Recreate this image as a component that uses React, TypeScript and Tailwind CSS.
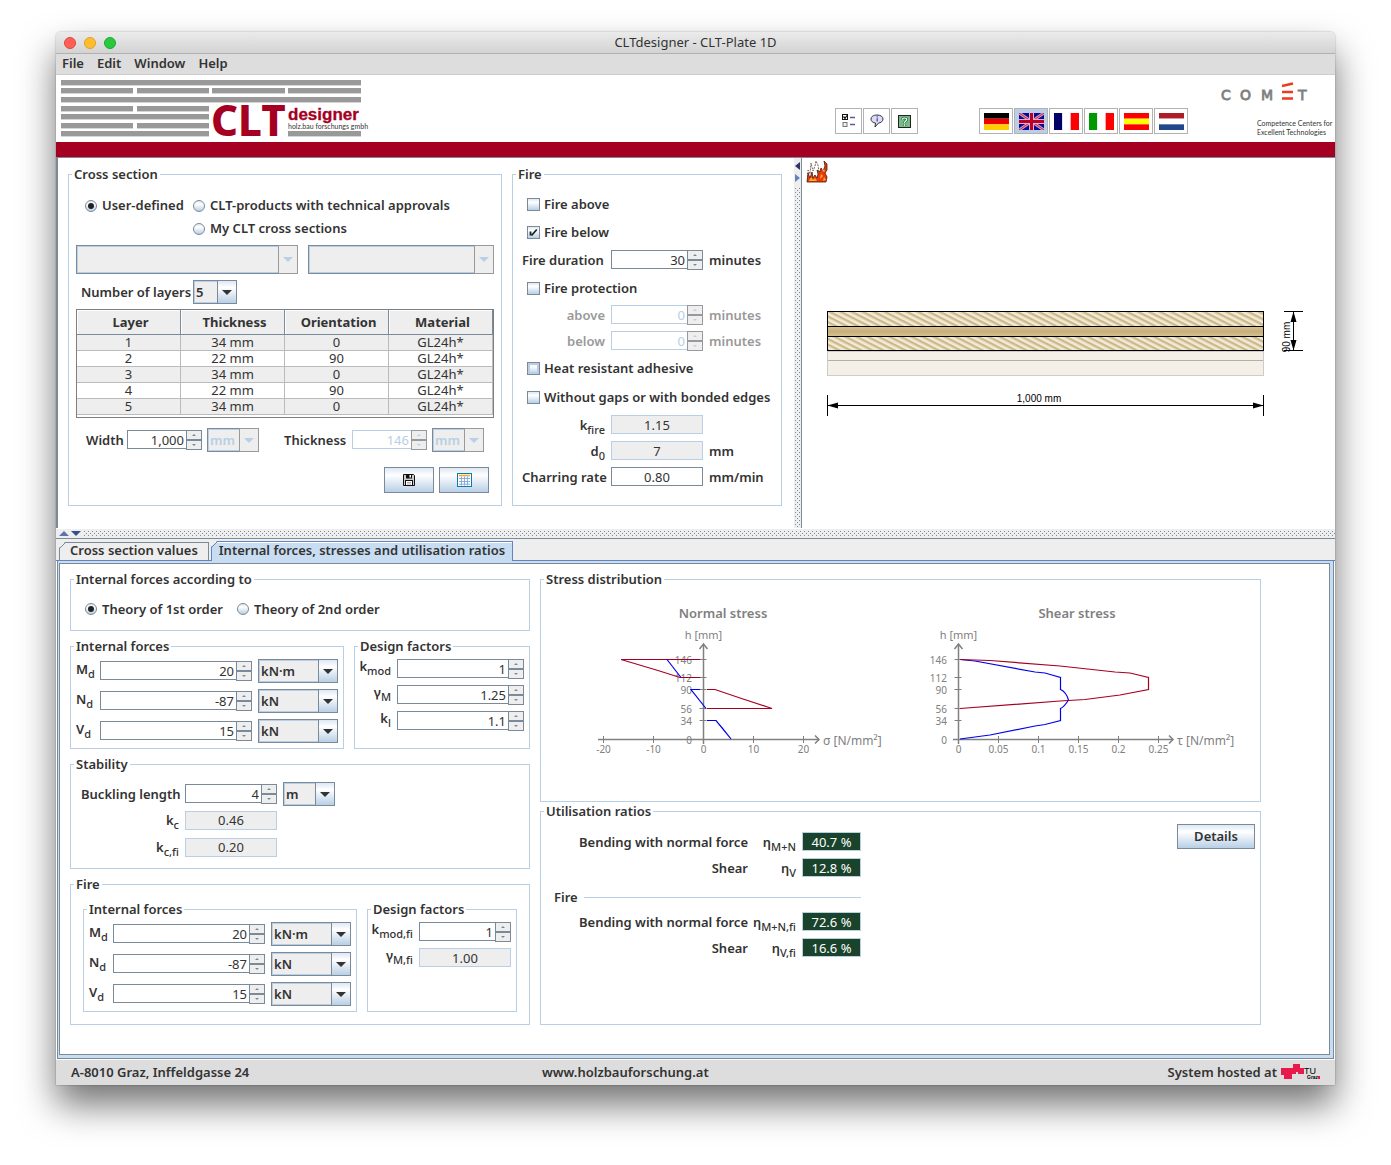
import { useId, type ReactNode } from "react"
import clsx from "clsx"

const layers = [
  { thickness: "34 mm", orientation: "0", material: "GL24h*" },
  { thickness: "22 mm", orientation: "90", material: "GL24h*" },
  { thickness: "34 mm", orientation: "0", material: "GL24h*" },
  { thickness: "22 mm", orientation: "90", material: "GL24h*" },
  { thickness: "34 mm", orientation: "0", material: "GL24h*" },
]

const forces = [
  { symbol: "M", value: "20", unit: "kN·m" },
  { symbol: "N", value: "-87", unit: "kN" },
  { symbol: "V", value: "15", unit: "kN" },
]

function Group({ title, className, children }: { title: string; className?: string; children: ReactNode }) {
  return (
    <fieldset className={clsx("min-w-0 border border-[#b8cfe5]", className)}>
      <legend className="ml-[3px] px-[2px] leading-[17px]">{title}</legend>
      {children}
    </fieldset>
  )
}

function Sym({ base, sub }: { base: string; sub: string }) {
  return (
    <span className="whitespace-nowrap">
      {base}
      <span className="relative top-1 text-[11px] font-medium">{sub}</span>
    </span>
  )
}

function Spinner({ id, label, value, className, disabled }: { id?: string; label?: string; value: string; className?: string; disabled?: boolean }) {
  const step = clsx(
    "flex h-[10px] w-4 items-center justify-center border bg-[#eeeeee]",
    disabled ? "border-[#999999] text-[#b8cfe5]" : "border-[#7a8a99] text-[#7a8a99]",
  )
  return (
    <div className={clsx("flex h-5 min-w-0 items-start", className)}>
      <input
        id={id}
        aria-label={label}
        defaultValue={value}
        disabled={disabled}
        className={clsx(
          "h-[19px] min-w-0 flex-1 border border-r-0 bg-white pr-[2px] text-right font-normal",
          disabled ? "border-[#b8cfe5] text-[#b8cfe5]" : "border-[#7a8a99]",
        )}
      />
      <span className="flex flex-col">
        <button type="button" aria-label="Increase" disabled={disabled} className={step}>
          <svg width="4" height="2" viewBox="0 0 4 2" fill="currentColor">
            <path d="M0 2L2 0L4 2Z" />
          </svg>
        </button>
        <button type="button" aria-label="Decrease" disabled={disabled} className={step}>
          <svg width="4" height="2" viewBox="0 0 4 2" fill="currentColor">
            <path d="M0 0L2 2L4 0Z" />
          </svg>
        </button>
      </span>
    </div>
  )
}

function Combo({ id, label, value, className, disabled }: { id?: string; label?: string; value: string; className?: string; disabled?: boolean }) {
  return (
    <div className={clsx("relative", className)}>
      <select
        id={id}
        aria-label={label}
        disabled={disabled}
        className={clsx(
          "h-full w-full appearance-none border border-[#7a8a99] bg-[#eeeeee] pl-[2px] opacity-100 shadow-[inset_1px_1px_0_#b8cfe5,inset_0_-1px_0_#b8cfe5]",
          disabled && "text-[#b8cfe5]",
        )}
      >
        <option>{value}</option>
      </select>
      <span
        className={clsx(
          "pointer-events-none absolute inset-y-0 right-0 flex w-5 items-center justify-center border",
          disabled
            ? "border-[#999999] bg-[#eeeeee] text-[#b8cfe5]"
            : "border-[#7a8a99] bg-linear-to-b from-[#dde8f3] via-white via-30% to-[#b8cfe5] text-[#333333]",
        )}
      >
        <svg width="10" height="5" viewBox="0 0 10 5" fill="currentColor">
          <path d="M0 0H10L5 5Z" />
        </svg>
      </span>
    </div>
  )
}

function Radio({ name, label, checked }: { name: string; label: string; checked?: boolean }) {
  return (
    <label className="flex items-center gap-[5px] whitespace-nowrap">
      <span className="grid place-items-center">
        <input
          type="radio"
          name={name}
          defaultChecked={checked}
          className="peer col-start-1 row-start-1 size-3 appearance-none rounded-full border border-[#7a8a99] bg-linear-to-b from-[#dde8f3] via-white via-30% to-[#b8cfe5]"
        />
        <span className="pointer-events-none invisible col-start-1 row-start-1 size-[6px] rounded-full bg-[#222222] peer-checked:visible" />
      </span>
      {label}
    </label>
  )
}

function Check({ label, checked, pressed }: { label: string; checked?: boolean; pressed?: boolean }) {
  return (
    <label className="flex items-center gap-1 whitespace-nowrap">
      <span className="grid place-items-center">
        <input
          type="checkbox"
          defaultChecked={checked}
          className={clsx(
            "peer col-start-1 row-start-1 size-[13px] appearance-none border border-[#7a8a99] bg-linear-to-b from-[#dde8f3] via-white via-30% to-[#b8cfe5]",
            pressed && "shadow-[inset_0_0_0_2px_#b8cfe5]",
          )}
        />
        <svg className="pointer-events-none invisible col-start-1 row-start-1 peer-checked:visible" width="9" height="9" viewBox="0 0 9 9">
          <path d="M1.5 3.5V7.5M2.5 7.5L7.8 1.5" fill="none" stroke="#222222" strokeWidth="1.8" />
        </svg>
      </span>
      {label}
    </label>
  )
}

function Result({ id, value, className }: { id: string; value: string; className?: string }) {
  return (
    <input
      id={id}
      readOnly
      value={value}
      className={clsx("mb-px h-[19px] border border-[#b8cfe5] bg-[#eeeeee] text-center font-normal", className)}
    />
  )
}

const metal = "border border-[#7a8a99] bg-linear-to-b from-[#dde8f3] via-white via-30% to-[#b8cfe5]"

function ForcesGroup({ className }: { className?: string }) {
  const id = useId()
  return (
    <Group title="Internal forces" className={className}>
      <div className="flex flex-col gap-[6px] px-[5px] pt-1 pb-[5px]">
        {forces.map((f) => (
          <div key={f.symbol} className="flex h-6 items-center">
            <label htmlFor={id + f.symbol} className="w-6 shrink-0 self-start leading-5">
              <Sym base={f.symbol} sub="d" />
            </label>
            <Spinner id={id + f.symbol} value={f.value} className="flex-1" />
            <Combo label={`Unit of ${f.symbol}`} value={f.unit} className="ml-[6px] h-6 w-20 shrink-0" />
          </div>
        ))}
      </div>
    </Group>
  )
}

function Logo() {
  const bars = [
    [0, 0, 300], [0, 8, 72], [76, 8, 72], [151, 8, 73], [227, 8, 73], [0, 17, 300],
    [0, 26, 72], [76, 26, 72], [0, 34, 148], [0, 43, 72], [76, 43, 72], [0, 51, 148], [227, 51, 73],
  ]
  return (
    <svg width="300" height="58" viewBox="0 0 300 58" className="overflow-visible" role="img" aria-label="CLT designer">
      {bars.map(([x, y, w]) => (
        <rect key={`${x}-${y}`} x={x} y={y} width={w} height="5.4" fill="#999999" />
      ))}
      <text x="150" y="56" fontSize="42" fontWeight="800" fill="#a50021" className="font-['Noto_Sans',sans-serif]">CLT</text>
      <text x="227" y="40" fontSize="17" fontWeight="700" fill="#a50021" stroke="#a50021" strokeWidth="0.3" className="font-['Liberation_Sans',sans-serif]">designer</text>
      <text x="227" y="49" fontSize="7" fontWeight="400" fill="#333333" className="font-['Lato',sans-serif]">holz.bau forschungs gmbh</text>
    </svg>
  )
}

function CometLogo() {
  return (
    <svg width="110" height="58" viewBox="0 0 110 58" className="overflow-visible" role="img" aria-label="COMET Competence Centers for Excellent Technologies">
      <g fontSize="14" fontWeight="400" fill="#808080" stroke="#808080" strokeWidth="0.8" className="font-['DejaVu_Sans',sans-serif]">
        <text x="0" y="20">C</text>
        <text x="19" y="20">O</text>
        <text x="40" y="20">M</text>
        <text x="77" y="20">T</text>
      </g>
      <path d="M61 6L72 3.500M61 12H72M61 18.500H72" stroke="#ee3a20" strokeWidth="2.4" fill="none" />
      <g fontSize="7" fontWeight="400" fill="#333333" className="font-['Lato',sans-serif]">
        <text x="36" y="46">Competence Centers for</text>
        <text x="36" y="55">Excellent Technologies</text>
      </g>
    </svg>
  )
}

const stripes = [
  { name: "Deutsch", dir: "h", colors: ["#000000", "#ee0000", "#ffcc00"] },
  { name: "English", dir: "uk", colors: [] },
  { name: "Français", dir: "v", colors: ["#000066", "#ffffff", "#ff0000"] },
  { name: "Italiano", dir: "v", colors: ["#009900", "#ffffff", "#ff0000"] },
  { name: "Español", dir: "h", colors: ["#ff0000", "#ffff00", "#ff0000"] },
  { name: "Nederlands", dir: "h", colors: ["#ae1c28", "#ffffff", "#21468b"] },
]

function Flag({ dir, colors }: { dir: string; colors: string[] }) {
  return (
    <svg width="25" height="17" viewBox="0 0 25 17">
      {dir === "h" && colors.map((c, i) => <rect key={i} y={i * 5.67} width="25" height="5.67" fill={c} />)}
      {dir === "v" && colors.map((c, i) => <rect key={i} x={i * 8.33} width="8.34" height="17" fill={c} />)}
      {dir === "uk" && (
        <>
          <rect width="25" height="17" fill="#0a0a9a" />
          <path d="M0 0L25 17M25 0L0 17" stroke="#d8a0b8" strokeWidth="3" />
          <path d="M0 0L25 17M25 0L0 17" stroke="#c8204a" strokeWidth="1" />
          <path d="M12.5 0V17M0 8.5H25" stroke="#e0b0c4" strokeWidth="5" />
          <path d="M12.5 0V17M0 8.5H25" stroke="#b8002a" strokeWidth="3" />
        </>
      )}
    </svg>
  )
}

function Header() {
  const tool = "flex h-[26px] w-[27px] items-center justify-center border border-[#b2b2b2] bg-white"
  return (
    <header className="flex h-[67px] items-start bg-white pl-[5px] pr-1 pt-[5px]">
      <Logo />
      <div className="flex flex-1 justify-end gap-px pt-7">
        <button type="button" aria-label="Options" className={tool}>
          <svg width="14" height="14" viewBox="0 0 14 14">
            <rect x="0.5" y="0.5" width="5" height="5" fill="#fff" stroke="#111" />
            <path d="M1.5 2.5L3 4.5L5 1.5" fill="none" stroke="#111" strokeWidth="1.3" />
            <rect x="1" y="8.5" width="4" height="4" fill="#eee" stroke="#777" />
            <path d="M8 3.5H13M8 10.5H13" stroke="#5a5a9a" strokeWidth="1.4" />
          </svg>
        </button>
        <button type="button" aria-label="Info" className={tool}>
          <svg width="14" height="14" viewBox="0 0 14 14">
            <path d="M7 1C10.500 1 13 2.600 13 5C13 7.400 10.500 9 8.500 9L5 13L5.500 9C3 8.800 1 7.300 1 5C1 2.600 3.500 1 7 1Z" fill="#dcdcf4" stroke="#333" />
            <path d="M7.200 2.300V3.400M7.200 4.300V7.500" stroke="#4444aa" strokeWidth="1.2" />
          </svg>
        </button>
        <button type="button" aria-label="Help" className={tool}>
          <svg width="13" height="13" viewBox="0 0 13 13">
            <rect x="0.500" y="0.500" width="12" height="12" fill="#7ab88a" stroke="#222" />
            <path d="M4.300 4.500C4.300 2.500 8.700 2.500 8.700 4.500C8.700 6 6.500 6 6.500 8M6.500 9.200V10.800" fill="none" stroke="#173" strokeWidth="2.600" />
            <path d="M4.300 4.500C4.300 2.500 8.700 2.500 8.700 4.500C8.700 6 6.500 6 6.500 8M6.500 9.200V10.800" fill="none" stroke="#fff" strokeWidth="1.200" />
          </svg>
        </button>
      </div>
      <div className="ml-[61px] mr-[33px] flex gap-px pt-7">
        {stripes.map((s) => (
          <button
            key={s.name}
            type="button"
            aria-label={s.name}
            className={clsx(
              "flex h-[26px] w-[34px] items-center justify-center border border-[#b2b2b2]",
              s.dir === "uk" ? "bg-[#b8cfe5]" : "bg-white",
            )}
          >
            <Flag dir={s.dir} colors={s.colors} />
          </button>
        ))}
      </div>
      <CometLogo />
    </header>
  )
}

function CrossSectionGroup() {
  return (
    <Group title="Cross section" className="w-[434px]">
      <div className="px-[7px] pt-[11px] pb-3">
        <div className="grid grid-cols-[108px_1fr] auto-rows-[23px] items-center pl-[9px]">
          <Radio name="source" label="User-defined" checked />
          <Radio name="source" label="CLT-products with technical approvals" />
          <span />
          <Radio name="source" label="My CLT cross sections" />
        </div>
        <div className="mt-[5px] flex h-[29px] gap-[10px]">
          <Combo label="Producer" value="" disabled className="w-[222px]" />
          <Combo label="Product" value="" disabled className="flex-1" />
        </div>
        <div className="mt-[6px] flex items-center pl-[5px]">
          <label htmlFor="layers" className="w-28 whitespace-nowrap">Number of layers</label>
          <Combo id="layers" value="5" className="h-6 w-11" />
        </div>
        <div className="mt-[5px] border border-[#7f7f7f] pb-[2px]">
          <table className="w-full table-fixed border-separate border-spacing-0 text-center">
            <thead>
              <tr>
                {["Layer", "Thickness", "Orientation", "Material"].map((h) => (
                  <th key={h} className="h-[25px] border-r border-b border-[#7a8a99] bg-[#eeeeee] p-0 pl-1 shadow-[inset_1px_1px_0_#ffffff]">
                    {h}
                  </th>
                ))}
              </tr>
            </thead>
            <tbody className="leading-[15px] font-normal">
              {layers.map((l, i) => (
                <tr key={i} className="odd:bg-[#eeeeee] *:border-r *:border-b *:border-[#bbbbbb] *:p-0">
                  <td>{i + 1}</td>
                  <td>{l.thickness}</td>
                  <td>{l.orientation}</td>
                  <td>{l.material}</td>
                </tr>
              ))}
            </tbody>
          </table>
        </div>
        <div className="mt-[10px] flex h-6 items-center pl-[10px]">
          <label htmlFor="width" className="w-[41px]">Width</label>
          <Spinner id="width" value="1,000" className="w-[75px]" />
          <Combo label="Width unit" value="mm" disabled className="ml-[5px] h-6 w-[52px]" />
          <label htmlFor="thickness" className="ml-[25px] w-[68px]">Thickness</label>
          <Spinner id="thickness" value="146" disabled className="w-[75px]" />
          <Combo label="Thickness unit" value="mm" disabled className="ml-[5px] h-6 w-[52px]" />
        </div>
        <div className="mt-[15px] flex justify-end gap-[5px] pr-[5px]">
          <button type="button" aria-label="Save" className={clsx("flex h-[26px] w-[50px] items-center justify-center", metal)}>
            <svg width="12" height="12" viewBox="0 0 12 12">
              <path d="M0.500 0.500H10.500L11.500 1.500V11.500H0.500Z" fill="#cccccc" stroke="#111" />
              <rect x="3" y="0" width="6" height="4.500" fill="#111" />
              <rect x="6.500" y="1" width="1.500" height="2.500" fill="#fff" />
              <rect x="2.500" y="6.500" width="7" height="5" fill="#fff" stroke="#111" />
              <path d="M4 8.500H8M4 10H8" stroke="#999" strokeWidth="0.800" />
            </svg>
          </button>
          <button type="button" aria-label="Table" className={clsx("flex h-[26px] w-[50px] items-center justify-center", metal)}>
            <svg width="15" height="14" viewBox="0 0 15 14">
              <rect x="0.500" y="0.500" width="14" height="13" fill="#fff" stroke="#0a7ab8" />
              <path d="M2 2.500H13" stroke="#f0b030" strokeWidth="1.600" />
              <path d="M2 5.500H13M2 8.500H13M2 11.200H13M4.500 3.500V12.500M7.500 3.500V12.500M10.500 3.500V12.500" stroke="#88aedd" />
            </svg>
          </button>
        </div>
      </div>
    </Group>
  )
}

function FireGroup() {
  const row = "grid grid-cols-[83px_92px_1fr] gap-x-[6px] items-center h-[26px]"
  return (
    <Group title="Fire" className="w-[270px]">
      <div className="pl-[9px] pt-[7px] pb-[15px]">
        <div className="flex h-7 items-center pl-[5px]"><Check label="Fire above" /></div>
        <div className="flex h-7 items-center pl-[5px]"><Check label="Fire below" checked /></div>
        <div className="grid h-7 grid-cols-[83px_92px_1fr] items-center gap-x-[6px]">
          <label htmlFor="duration" className="whitespace-nowrap">Fire duration</label>
          <Spinner id="duration" value="30" />
          <span>minutes</span>
        </div>
        <div className="flex h-7 items-center pl-[5px]"><Check label="Fire protection" /></div>
        <div className={clsx(row, "text-[#999999]")}>
          <label htmlFor="above" className="text-right">above</label>
          <Spinner id="above" value="0" disabled />
          <span>minutes</span>
        </div>
        <div className={clsx(row, "text-[#999999]")}>
          <label htmlFor="below" className="text-right">below</label>
          <Spinner id="below" value="0" disabled />
          <span>minutes</span>
        </div>
        <div className="flex h-[29px] items-center pl-[5px]"><Check label="Heat resistant adhesive" pressed /></div>
        <div className="flex h-[29px] items-center pl-[5px]"><Check label="Without gaps or with bonded edges" /></div>
        <div className={row}>
          <label htmlFor="kfire" className="text-right"><Sym base="k" sub="fire" /></label>
          <Result id="kfire" value="1.15" />
        </div>
        <div className={row}>
          <label htmlFor="d0" className="text-right"><Sym base="d" sub="0" /></label>
          <Result id="d0" value="7" />
          <span>mm</span>
        </div>
        <div className={row}>
          <label htmlFor="charring" className="whitespace-nowrap">Charring rate</label>
          <input id="charring" defaultValue="0.80" className="mb-px h-[19px] border border-[#7a8a99] bg-white text-center font-normal" />
          <span>mm/min</span>
        </div>
      </div>
    </Group>
  )
}

function Dots({ id, className }: { id: string; className?: string }) {
  return (
    <svg className={className} aria-hidden="true">
      <defs>
        <pattern id={id} width="4" height="4" patternUnits="userSpaceOnUse">
          <rect width="1" height="1" fill="#7a8a99" />
          <rect x="2" y="2" width="1" height="1" fill="#7a8a99" />
        </pattern>
      </defs>
      <rect width="100%" height="100%" fill={`url(#${id})`} />
    </svg>
  )
}

function PlateDrawing() {
  return (
    <svg className="h-full w-full" viewBox="802 158 531 370" preserveAspectRatio="xMinYMin meet" role="img" aria-label="CLT plate">
      <defs>
        <pattern id="grain" width="8" height="5" patternUnits="userSpaceOnUse" patternTransform="rotate(27)">
          <rect width="8" height="5" fill="#f1ead8" />
          <rect width="8" height="2.3" fill="#cdb987" />
        </pattern>
        <linearGradient id="core" x2="0" y2="1">
          <stop offset="0" stopColor="#d6c497" />
          <stop offset="0.5" stopColor="#c6ae78" />
          <stop offset="1" stopColor="#d6c497" />
        </linearGradient>
      </defs>
      <g>
        <path d="M808 180L808 170L810 174L811 163L813 171L815 166L816 161L818 165L819 172L820 176L818 180Z" fill="#ffffff" stroke="#5a3a34" strokeWidth="0.8" strokeDasharray="2 1" />
        <path d="M807 182L808 173L810 178L812 172L813 178L815 175L817 178L818 174L817 170L820 172L821 168L823 171L825 166L824 161L827 164L827 170L825 173L827 177L826 182Z" fill="#e83a10" stroke="#4a1a0a" strokeWidth="0.8" />
        <path d="M809 181L811 177L813 180L815 178L817 181ZM820 179L821 174L823 176ZM823 181L824 177L826 180ZM822 171L824 169L825 172Z" fill="#ffb020" />
      </g>
      <rect x="827.5" y="351.5" width="436" height="24" fill="#f4f0e8" stroke="#cccccc" />
      <path d="M828 360.500H1263" stroke="#b4b0a8" />
      <g stroke="#000000">
        <rect x="827.5" y="311.500" width="436" height="15" fill="url(#grain)" />
        <rect x="827.5" y="326.500" width="436" height="10" fill="url(#core)" />
        <rect x="827.5" y="336.500" width="436" height="14" fill="url(#grain)" />
        <path d="M827.500 395V416M1263.500 395V416M828 405.500H1263M1284 311.500H1303M1284 350.500H1303M1293.500 312V350" />
      </g>
      <path d="M827.500 405.500L838 402.500V408.500ZM1263.500 405.500L1253 402.500V408.500ZM1293.500 311.500L1290.500 322H1296.500ZM1293.500 350.500L1290.500 340H1296.500Z" />
      <g fontSize="10" fontWeight="400" fill="#000000" textAnchor="middle" className="font-['Liberation_Sans',sans-serif]">
        <text x="1039" y="402">1,000 mm</text>
        <text transform="translate(1290 337) rotate(-90)">90 mm</text>
      </g>
    </svg>
  )
}

const heights = [
  { label: "146", y: 659.5 },
  { label: "112", y: 677.5 },
  { label: "90", y: 689.5 },
  { label: "56", y: 708.5 },
  { label: "34", y: 720.5 },
  { label: "0", y: 739.5 },
]

function Axes({ x0, left, right, labelX, ticks, unit }: { x0: number; left: number; right: number; labelX: number; ticks: [string, number][]; unit: string }) {
  return (
    <>
      <g stroke="#808080" fill="none">
        <path d={`M${x0} 744V645M${left} 739.500H${right}`} strokeWidth="1.5" />
        <path d={`M${x0 - 4} 649L${x0} 644L${x0 + 4} 649M${right - 4} 735.500L${right} 739.500L${right - 4} 743.500`} strokeWidth="1.5" />
        {heights.map((h) => (
          <path key={h.label} d={`M${x0 - 4} ${h.y}H${x0 + 3}`} />
        ))}
        {ticks.map(([t, x]) => (
          <path key={t} d={`M${x} 736V743`} />
        ))}
      </g>
      <g fill="#808080" fontSize="10" fontWeight="400">
        <text x={x0} y="639" fontSize="11" textAnchor="middle">h [mm]</text>
        {heights.map((h) => (
          <text key={h.label} x={labelX} y={h.y + 4.5} textAnchor="end">{h.label}</text>
        ))}
        {ticks.map(([t, x]) => (
          <text key={t} x={x} y="753" textAnchor="middle">{t}</text>
        ))}
        <text x={right + 4} y="745" fontSize="12">{unit}</text>
      </g>
    </>
  )
}

function StressCharts() {
  return (
    <svg className="block h-[213px] w-full" viewBox="541 588 719 213" preserveAspectRatio="xMinYMin meet" role="img" aria-label="Stress distribution">
      <g fill="#808080" fontSize="13" textAnchor="middle">
        <text x="723" y="618">Normal stress</text>
        <text x="1077" y="618">Shear stress</text>
      </g>
      <Axes
        x0={703.5}
        left={598}
        right={819}
        labelX={692}
        unit="σ [N/mm²]"
        ticks={[["-20", 603.5], ["-10", 653.5], ["0", 703.5], ["10", 753.5], ["20", 803.5]]}
      />
      <g fill="none" strokeWidth="1.2">
        <path d="M621 659.500H700M621 659.500L658 670.500L680 677.500H700M707 689.500H715L743 699L772 708.500H707" stroke="#a50021" />
        <path d="M667 659.500L681 677.500M700 689.500H691L706 708.500M707 720.500H716L723 729L731 739" stroke="#0000ee" />
      </g>
      <Axes
        x0={958.5}
        left={953}
        right={1173}
        labelX={947}
        unit="τ [N/mm²]"
        ticks={[["0", 958.5], ["0.05", 998.5], ["0.1", 1038.5], ["0.15", 1078.5], ["0.2", 1118.5], ["0.25", 1158.5]]}
      />
      <g fill="none" strokeWidth="1.2">
        <path d="M960 659.500L975 661L1035 672L1045 673L1060.500 677.500V689.500C1064 691 1067 695 1068.500 700C1066 704 1064 707 1060.500 708.500V720.500L1045 724.500L1035 726L990 735L960 739" stroke="#0000ee" />
        <path d="M960 659.500L990 660.500L1060 666L1115 672L1130 673L1148.500 677.500V689.500L1120 695L1085 699.500L1060 701L960 708.500" stroke="#a50021" />
      </g>
    </svg>
  )
}

function Ratio({ label, sub, value }: { label: string; sub: string; value: string }) {
  return (
    <div className="grid h-[26px] grid-cols-[1fr_42px_59px] items-center gap-x-[6px]">
      <label htmlFor={sub} className="whitespace-nowrap text-right">{label}</label>
      <span className="flex justify-end"><Sym base="η" sub={sub} /></span>
      <input id={sub} readOnly value={value} className="mb-px h-[19px] w-full border border-[#b8cfe5] bg-[#1a432c] text-center font-normal text-white" />
    </div>
  )
}

export default function App() {
  return (
    <div className="min-h-screen bg-white px-14 pt-8 pb-20 font-['Noto_Sans',sans-serif] text-[13px] leading-[15px] font-semibold text-[#333333]">
      <div className="overflow-hidden rounded-t-[5px] bg-white shadow-[0_0_2px_rgba(0,0,0,0.35),0_20px_36px_rgba(0,0,0,0.55)]">
        <div className="grid h-[22px] grid-cols-[1fr_auto_1fr] items-center border-b border-[#b1b1b1] bg-linear-to-b from-[#ebebeb] to-[#d3d3d3] px-2 font-normal">
          <div className="flex gap-2">
            <button type="button" aria-label="Close" className="size-3 rounded-full border border-[#e0443e] bg-[#ff5f57]" />
            <button type="button" aria-label="Minimize" className="size-3 rounded-full border border-[#dea123] bg-[#ffbd2e]" />
            <button type="button" aria-label="Zoom" className="size-3 rounded-full border border-[#1aab29] bg-[#28c940]" />
          </div>
          <span>CLTdesigner - CLT-Plate 1D</span>
        </div>
        <nav className="flex h-[21px] items-center gap-[13px] border-b border-[#cccccc] bg-[#dddddd] px-[6px] pb-px">
          <button type="button">File</button>
          <button type="button">Edit</button>
          <button type="button">Window</button>
          <button type="button">Help</button>
        </nav>
        <Header />
        <div className="h-4 border-b border-[#7a8a99] bg-[#a50021]" />

        <div className="flex">
          <section className="flex items-start gap-[10px] border-l-2 border-[#7a8a99] pt-2 pr-3 pb-[22px] pl-[10px]">
            <CrossSectionGroup />
            <FireGroup />
          </section>
          <div className="flex w-2 shrink-0 flex-col items-center gap-[6px] border-r border-[#7a8a99] bg-[#eeeeee] pt-1">
            <svg width="5" height="20" viewBox="0 0 5 20">
              <path d="M5 0V8L0 4Z" fill="#333366" />
              <path d="M0 12V20L5 16Z" fill="#6382bf" />
            </svg>
            <Dots id="dots-v" className="w-[5px] flex-1" />
          </div>
          <div className="h-[370px] min-w-0 flex-1">
            <PlateDrawing />
          </div>
        </div>

        <div className="mt-px flex h-[10px] items-center gap-[3px] border-b border-[#7a8a99] bg-[#eeeeee] pl-[3px]">
          <svg width="22" height="5" viewBox="0 0 22 5">
            <path d="M0 5H10L5 0Z" fill="#5a74b0" />
            <path d="M12 0H22L17 5Z" fill="#33508c" />
          </svg>
          <Dots id="dots-h" className="h-[5px] flex-1" />
        </div>

        <div role="tablist" className="flex h-[22px] items-end bg-[#eeeeee]">
          <div className="flex h-[19px] border-b border-[#6382bf] pr-[2px] pl-[3px]">
            <button type="button" role="tab" aria-selected="false" className="relative border border-b-0 border-[#7a8a99] px-[10px] pb-[2px]">
              <svg className="absolute -top-px -left-px" width="7" height="7" viewBox="0 0 7 7">
                <path d="M0 0H6L0 6Z" fill="#eeeeee" />
                <path d="M0.500 6.500L6.500 0.500" stroke="#7a8a99" />
              </svg>
              Cross section values
            </button>
          </div>
          <button type="button" role="tab" aria-selected="true" className="relative h-5 border border-b-0 border-[#6382bf] bg-[#c8ddf2] px-[7px] pb-[3px] shadow-[inset_0_1px_0_#ffffff]">
            <svg className="absolute -top-px -left-px" width="7" height="7" viewBox="0 0 7 7">
              <path d="M0 0H6L0 6Z" fill="#eeeeee" />
              <path d="M0.500 6.500L6.500 0.500" stroke="#6382bf" />
            </svg>
            Internal forces, stresses and utilisation ratios
          </button>
          <div className="flex-1 self-stretch border-b border-[#6382bf]" />
        </div>

        <div className="mx-px border border-t-0 border-[#7a8a99] bg-[#c8ddf2] pt-[2px] pr-[3px] pb-[3px] pl-px">
          <div className="flex gap-[10px] border border-[#7a8a99] bg-white pt-[7px] pr-[68px] pb-[29px] pl-[10px]">
            <div className="flex w-[460px] shrink-0 flex-col gap-[7px]">
              <Group title="Internal forces according to">
                <div className="flex h-[42px] items-center gap-[14px] pl-[14px]">
                  <Radio name="theory" label="Theory of 1st order" checked />
                  <Radio name="theory" label="Theory of 2nd order" />
                </div>
              </Group>
              <div className="flex gap-[10px]">
                <ForcesGroup className="w-[274px]" />
                <Group title="Design factors" className="flex-1">
                  <div className="grid grid-cols-[1fr_127px] gap-x-[6px] gap-y-[6px] pt-1 pr-[5px]">
                    <label htmlFor="kmod" className="text-right"><Sym base="k" sub="mod" /></label>
                    <Spinner id="kmod" value="1" />
                    <label htmlFor="gm" className="text-right"><Sym base="γ" sub="M" /></label>
                    <Spinner id="gm" value="1.25" />
                    <label htmlFor="kl" className="text-right"><Sym base="k" sub="l" /></label>
                    <Spinner id="kl" value="1.1" />
                  </div>
                </Group>
              </div>
              <Group title="Stability">
                <div className="grid grid-cols-[98px_92px_52px] items-center gap-x-[6px] gap-y-px pl-[10px] pt-[9px] pb-2">
                  <label htmlFor="buckling" className="whitespace-nowrap">Buckling length</label>
                  <Spinner id="buckling" value="4" />
                  <Combo label="Length unit" value="m" className="h-6" />
                  <label htmlFor="kc" className="text-right"><Sym base="k" sub="c" /></label>
                  <div className="col-span-2 flex h-[27px] items-center"><Result id="kc" value="0.46" className="w-[92px]" /></div>
                  <label htmlFor="kcfi" className="text-right"><Sym base="k" sub="c,fi" /></label>
                  <div className="col-span-2 flex h-[25px] items-center"><Result id="kcfi" value="0.20" className="w-[92px]" /></div>
                </div>
              </Group>
              <Group title="Fire">
                <div className="flex gap-[10px] px-3 pt-2 pb-3">
                  <ForcesGroup className="w-[274px]" />
                  <Group title="Design factors" className="flex-1">
                    <div className="grid grid-cols-[1fr_92px] gap-x-[6px] gap-y-[6px] pt-[4px] pr-[5px]">
                      <label htmlFor="kmodfi" className="text-right"><Sym base="k" sub="mod,fi" /></label>
                      <Spinner id="kmodfi" value="1" />
                      <label htmlFor="gmfi" className="text-right"><Sym base="γ" sub="M,fi" /></label>
                      <Result id="gmfi" value="1.00" />
                    </div>
                  </Group>
                </div>
              </Group>
            </div>

            <div className="flex min-w-0 flex-1 flex-col gap-px">
              <Group title="Stress distribution">
                <StressCharts />
              </Group>
              <Group title="Utilisation ratios" className="flex-1">
                <div className="flex items-start justify-between pl-[13px] pr-[5px]">
                  <div className="w-[307px] pt-[9px]">
                    <div className="pl-6">
                      <Ratio label="Bending with normal force" sub="M+N" value="40.7 %" />
                      <Ratio label="Shear" sub="V" value="12.8 %" />
                    </div>
                    <div className="flex h-7 items-center gap-[6px] pt-1">
                      <span>Fire</span>
                      <span className="h-px flex-1 bg-[#b8cfe5]" />
                    </div>
                    <div className="pl-6">
                      <Ratio label="Bending with normal force" sub="M+N,fi" value="72.6 %" />
                      <Ratio label="Shear" sub="V,fi" value="16.6 %" />
                    </div>
                  </div>
                  <button type="button" className={clsx("mt-1 h-[25px] w-[78px]", metal)}>Details</button>
                </div>
              </Group>
            </div>
          </div>
        </div>

        <footer className="mt-px grid h-[25px] grid-cols-[471px_1fr_auto] items-center bg-[#dddddd] pr-[14px] pb-px pl-[15px]">
          <span>A-8010 Graz, Inffeldgasse 24</span>
          <a href="#">www.holzbauforschung.at</a>
          <span className="flex items-center gap-1">
            System hosted at
            <svg width="40" height="16" viewBox="0 0 40 16" role="img" aria-label="TU Graz">
              <path d="M0 4H12V0H19V4H23V10H17V8H15V10H11V15H3V11H0Z" fill="#e8194b" />
              <text x="23" y="10" fontSize="9" fontWeight="400" fill="#000000" className="font-['Liberation_Sans',sans-serif]">TU</text>
              <text x="26" y="15" fontSize="5" fontWeight="700" fill="#000000" className="font-['Liberation_Sans',sans-serif]">Graz</text>
              <rect x="37" y="12" width="2" height="3" fill="#e8194b" />
            </svg>
          </span>
        </footer>
      </div>
    </div>
  )
}
